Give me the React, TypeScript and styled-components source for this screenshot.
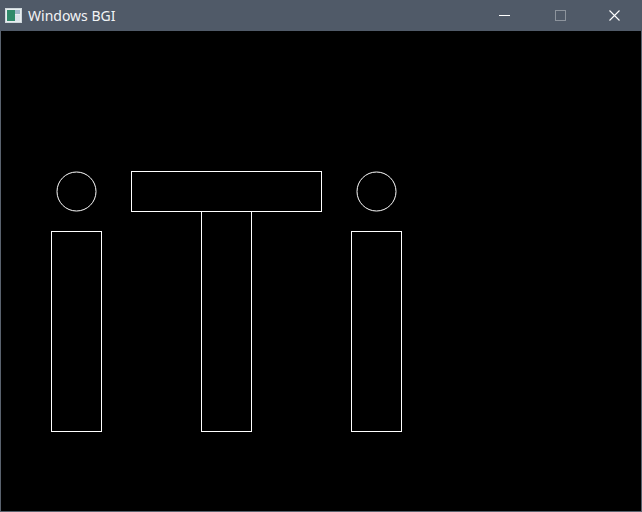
import React from "react";
import styled, { createGlobalStyle } from "styled-components";

const Global = createGlobalStyle`
  html, body { margin: 0; padding: 0; background: #000; }
  body { font-family: "Segoe UI", "Noto Sans", "Open Sans", sans-serif; }
`;

const Window = styled.div`
  width: 642px;
  height: 512px;
  box-sizing: border-box;
  border: 1px solid #59626e;
  border-top: none;
  display: flex;
  flex-direction: column;
  background: #000;
`;

const TitleBar = styled.div`
  height: 31px;
  margin: 0 -1px;
  background: #505a68;
  display: flex;
  align-items: center;
  flex-shrink: 0;
`;

const AppIcon = styled.svg`
  width: 17px;
  height: 15px;
  margin-left: 5px;
  margin-right: 6px;
  flex-shrink: 0;
`;

const Title = styled.span`
  color: #f2f4f6;
  font-size: 14px;
  font-family: "Noto Sans", "Open Sans", sans-serif;
  line-height: 1;
  flex: 1;
  margin-top: 1px;
`;

const Control = styled.div<{ $dim?: boolean; $w: number }>`
  width: ${(p) => p.$w}px;
  height: 31px;
  display: flex;
  align-items: center;
  justify-content: center;
  opacity: ${(p) => (p.$dim ? 0.35 : 1)};
`;

const Canvas = styled.svg`
  display: block;
  width: 640px;
  height: 480px;
  background: #000;
`;

const stroke = { fill: "none", stroke: "#fff", strokeWidth: 1 } as const;

export default function App() {
  return (
    <>
      <Global />
      <Window>
        <TitleBar>
          <AppIcon viewBox="0 0 17 15">
            <rect x="0.5" y="0.5" width="16" height="14" fill="#e8eef0" stroke="#cfd8dc" />
            <rect x="2" y="2" width="8" height="11" fill="#2f8a6a" />
            <rect x="10" y="2" width="5" height="4" fill="#9fb7c9" />
            <rect x="10" y="7" width="5" height="6" fill="#d9e3ea" />
          </AppIcon>
          <Title>Windows BGI</Title>
          <Control $w={60}>
            <svg width="11" height="11" viewBox="0 0 11 11">
              <line x1="0" y1="5.5" x2="11" y2="5.5" stroke="#fff" strokeWidth="1" />
            </svg>
          </Control>
          <Control $dim $w={52}>
            <svg width="11" height="11" viewBox="0 0 11 11">
              <rect x="0.5" y="0.5" width="10" height="10" fill="none" stroke="#fff" strokeWidth="1" />
            </svg>
          </Control>
          <Control $w={56}>
            <svg width="11" height="11" viewBox="0 0 11 11">
              <path d="M0.5 0.5 L10.5 10.5 M10.5 0.5 L0.5 10.5" stroke="#fff" strokeWidth="1.1" />
            </svg>
          </Control>
        </TitleBar>
        <Canvas viewBox="0 0 640 480">
          <circle cx="75.5" cy="160.5" r="19.5" {...stroke} />
          <rect x="50.5" y="200.5" width="50" height="200" {...stroke} shapeRendering="crispEdges" />
          <rect x="130.5" y="140.5" width="190" height="40" {...stroke} shapeRendering="crispEdges" />
          <rect x="200.5" y="180.5" width="50" height="220" {...stroke} shapeRendering="crispEdges" />
          <circle cx="375.5" cy="160.5" r="19.5" {...stroke} />
          <rect x="350.5" y="200.5" width="50" height="200" {...stroke} shapeRendering="crispEdges" />
        </Canvas>
      </Window>
    </>
  );
}
